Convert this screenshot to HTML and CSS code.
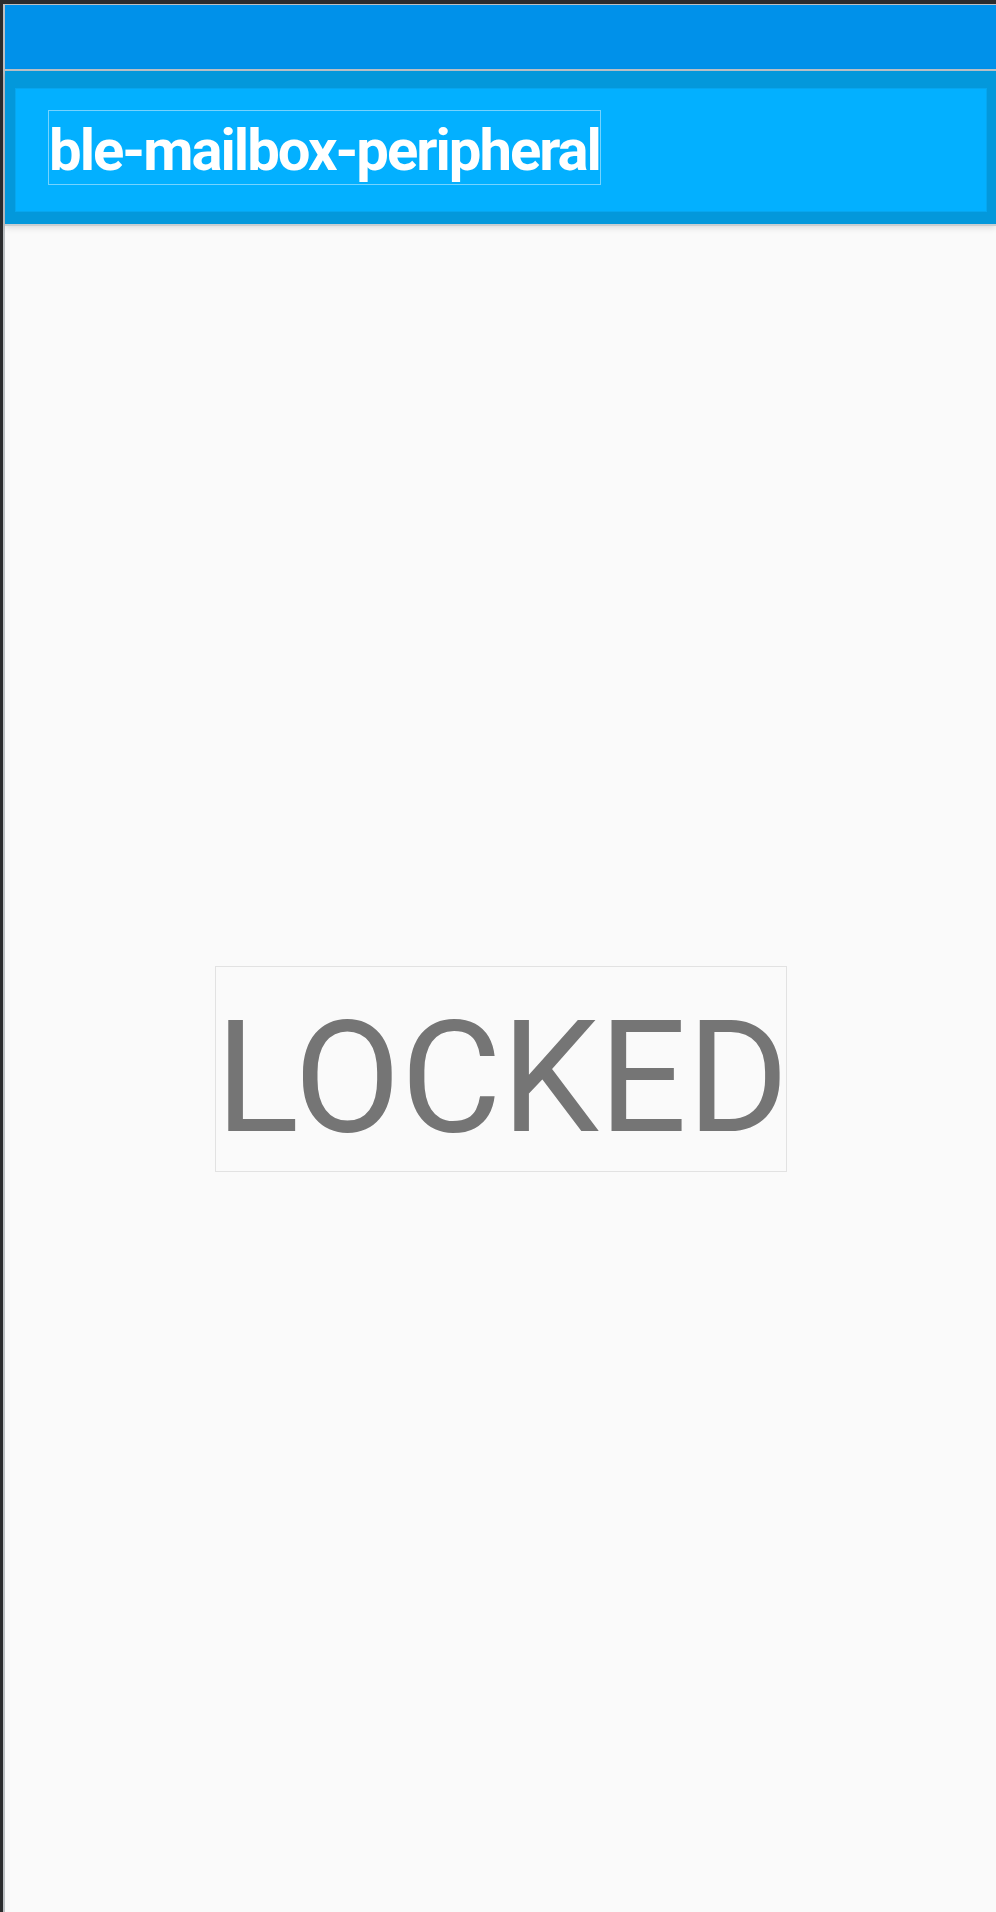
FILE: index.html
```html
<!DOCTYPE html>
<html>
<head>
<meta charset="utf-8">
<link rel="stylesheet" href="styles.css">
</head>
<body>
<div class="frame">
  <div class="window">
    <div class="status-bar"></div>
    <div class="app-bar">
      <div class="app-bar-inner">
        <h1 class="title">ble-mailbox-peripheral</h1>
      </div>
    </div>
    <main class="content">
      <div class="state-box">
        <span class="state-text">LOCKED</span>
      </div>
    </main>
  </div>
</div>
</body>
</html>
```
FILE: styles.css
```css
html, body {
  margin: 0;
  padding: 0;
}
body {
  background: #2b2c2e;
  font-family: Roboto, "Noto Sans", sans-serif;
}
.frame {
  padding: 4px 0 0 3px;
  height: 1908px;
}
.window {
  height: 100%;
  box-sizing: border-box;
  border-left: 2px solid #bcc0c3;
  border-top: 1px solid #bcc0c3;
  background: #fafafa;
  display: flex;
  flex-direction: column;
}
.status-bar {
  height: 64px;
  background: #0091ea;
  border-bottom: 2px solid #bcc3c8;
}
.app-bar {
  background: #0398db;
  padding: 17px 9px 12px 10px;
  border-bottom: 2px solid #c9ced1;
  box-shadow: 0 2px 6px rgba(0, 0, 0, 0.12);
  position: relative;
}
.app-bar-inner {
  background: #03b0ff;
  border: 1px solid #06a6ef;
  padding: 21px 0 0 32px;
  box-sizing: border-box;
  height: 124px;
}
.title {
  display: inline-block;
  margin: 0;
  padding: 5px 0 0 0;
  color: #ffffff;
  font-family: Roboto, sans-serif;
  font-weight: 700;
  font-size: 58px;
  line-height: 68px;
  letter-spacing: -2px;
  white-space: nowrap;
  border: 1px solid rgba(255, 255, 255, 0.45);
}
.content {
  flex: 1;
  display: flex;
  align-items: center;
  justify-content: center;
}
.state-box {
  width: 572px;
  box-sizing: border-box;
  border: 1px solid #e2e2e2;
  padding: 20px 0 2px 0;
  text-align: center;
}
.state-text {
  display: block;
  font-family: Roboto, sans-serif;
  font-size: 155px;
  line-height: 182px;
  color: #757575;
}
```
